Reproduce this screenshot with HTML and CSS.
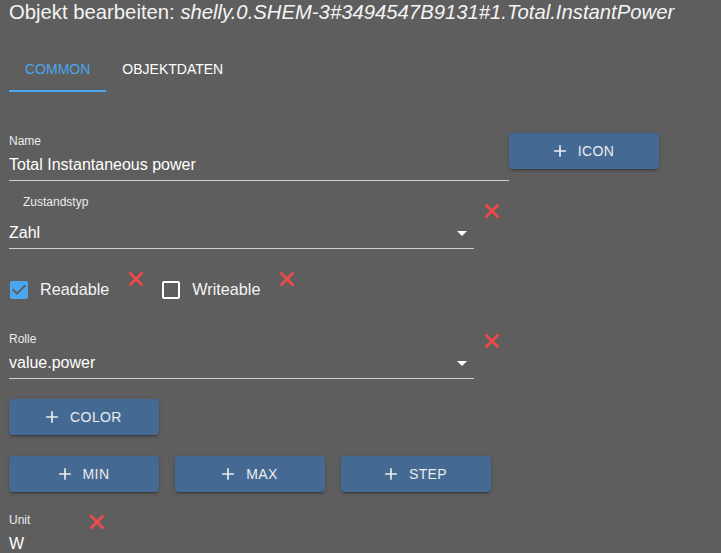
FILE: index.html
```html
<!DOCTYPE html>
<html lang="de">
<head>
    <meta charset="UTF-8">
    <meta name="viewport" content="width=device-width, initial-scale=1.0">
    <title>Objekt bearbeiten</title>
    <link rel="stylesheet" href="styles.css">
</head>
<body>
    <div class="dialog-title">Objekt bearbeiten: <i>shelly.0.SHEM-3#3494547B9131#1.Total.InstantPower</i></div>

    <div class="tabs">
        <div class="tab tab-active">Common</div>
        <div class="tab">Objektdaten</div>
    </div>

    <div class="row row-name">
        <div class="field field-name">
            <div class="field-label">Name</div>
            <div class="field-value">Total Instantaneous power</div>
        </div>
        <button class="btn">
            <svg class="btn-icon" viewBox="0 0 24 24"><path d="M19 13h-6v6h-2v-6H5v-2h6V5h2v6h6v2z"/></svg>
            Icon
        </button>
    </div>

    <div class="row row-type">
        <div class="field field-select">
            <div class="field-label label-indent">Zustandstyp</div>
            <div class="field-value select-value">
                <span>Zahl</span>
                <svg class="arrow" viewBox="0 0 24 24"><path d="M7 10l5 5 5-5z"/></svg>
            </div>
        </div>
        <svg class="clear clear-type" viewBox="0 0 16 16"><path d="M1.5 1.5L14.5 14.5M14.5 1.5L1.5 14.5"/></svg>
    </div>

    <div class="row row-check">
        <svg class="checkbox checkbox-on" viewBox="3 3 18 18"><path d="M19 3H5c-1.11 0-2 .9-2 2v14c0 1.1.89 2 2 2h14c1.11 0 2-.9 2-2V5c0-1.1-.89-2-2-2zm-9 14l-5-5 1.41-1.41L10 14.17l7.590-7.59L19 8l-9 9z"/></svg>
        <span class="check-label">Readable</span>
        <svg class="clear clear-check" viewBox="0 0 16 16"><path d="M1.5 1.5L14.5 14.5M14.5 1.5L1.5 14.5"/></svg>
        <svg class="checkbox checkbox-off" viewBox="3 3 18 18"><path d="M19 5v14H5V5h14m0-2H5c-1.1 0-2 .9-2 2v14c0 1.1.9 2 2 2h14c1.1 0 2-.9 2-2V5c0-1.1-.9-2-2-2z"/></svg>
        <span class="check-label">Writeable</span>
        <svg class="clear clear-check" viewBox="0 0 16 16"><path d="M1.5 1.5L14.5 14.5M14.5 1.5L1.5 14.5"/></svg>
    </div>

    <div class="row row-role">
        <div class="field field-select">
            <div class="field-label">Rolle</div>
            <div class="field-value select-value">
                <span>value.power</span>
                <svg class="arrow" viewBox="0 0 24 24"><path d="M7 10l5 5 5-5z"/></svg>
            </div>
        </div>
        <svg class="clear clear-role" viewBox="0 0 16 16"><path d="M1.5 1.5L14.5 14.5M14.5 1.5L1.5 14.5"/></svg>
    </div>

    <div class="row row-color">
        <button class="btn">
            <svg class="btn-icon" viewBox="0 0 24 24"><path d="M19 13h-6v6h-2v-6H5v-2h6V5h2v6h6v2z"/></svg>
            Color
        </button>
    </div>

    <div class="row row-limits">
        <button class="btn">
            <svg class="btn-icon" viewBox="0 0 24 24"><path d="M19 13h-6v6h-2v-6H5v-2h6V5h2v6h6v2z"/></svg>
            Min
        </button>
        <button class="btn">
            <svg class="btn-icon" viewBox="0 0 24 24"><path d="M19 13h-6v6h-2v-6H5v-2h6V5h2v6h6v2z"/></svg>
            Max
        </button>
        <button class="btn">
            <svg class="btn-icon" viewBox="0 0 24 24"><path d="M19 13h-6v6h-2v-6H5v-2h6V5h2v6h6v2z"/></svg>
            Step
        </button>
    </div>

    <div class="row row-unit">
        <div class="field field-unit">
            <div class="field-label">Unit</div>
            <div class="field-value">W</div>
        </div>
        <svg class="clear clear-unit" viewBox="0 0 16 16"><path d="M1.5 1.5L14.5 14.5M14.5 1.5L1.5 14.5"/></svg>
    </div>
</body>
</html>
```

FILE: styles.css
```css
body {
    margin: 0;
    padding: 0 9px;
    background-color: #5e5e5e;
    color: #fff;
    font-family: "Liberation Sans", Arial, sans-serif;
    overflow: hidden;
}

.dialog-title {
    font-size: 20.3px;
    line-height: 24px;
    color: #f4f4f4;
    margin-bottom: 20px;
    white-space: nowrap;
}

.tabs {
    display: flex;
    height: 48px;
}

.tab {
    padding: 4px 16px 0;
    line-height: 42px;
    font-size: 14px;
    text-transform: uppercase;
    color: #fff;
    border-bottom: 2px solid transparent;
}

.tab-active {
    color: #4aa6ef;
    border-bottom-color: #4aa6ef;
}

.row {
    display: flex;
    align-items: flex-start;
}

.field-label {
    font-size: 12px;
    line-height: 14px;
    color: #ececec;
}

.label-indent {
    padding-left: 14px;
}

.field-value {
    font-size: 16px;
    line-height: 19px;
    padding-bottom: 6px;
    border-bottom: 1px solid #cfcfcf;
}

.select-value {
    display: flex;
    justify-content: space-between;
    align-items: center;
}

.arrow {
    width: 24px;
    height: 24px;
    margin: -3px 0;
    fill: #fff;
}

/* name row */
.row-name {
    margin-top: 41px;
}

.field-name {
    width: 500px;
    padding-top: 1px;
}

.field-name .field-value {
    margin-top: 7px;
}

/* selects */
.field-select {
    width: 465px;
}

.row-type {
    margin-top: 14px;
}

.row-type .field-value {
    margin-top: 14px;
}

.row-role {
    margin-top: 33px;
}

.row-role .field-value {
    margin-top: 7px;
}

.clear {
    width: 16px;
    height: 16px;
    fill: none;
    stroke: #ef4a4a;
    stroke-width: 2.7;
    flex-shrink: 0;
}

.clear-type {
    margin: 8px 0 0 10px;
}

.clear-role {
    margin: 1px 0 0 10px;
}

/* checkboxes */
.row-check {
    margin-top: 22px;
}

.checkbox {
    width: 18px;
    height: 18px;
    margin-top: 10px;
}

.checkbox-on {
    margin-left: 1px;
    fill: #4aa6ef;
}

.checkbox-off {
    margin-left: 18px;
    fill: #fff;
}

.check-label {
    font-size: 16.2px;
    line-height: 19px;
    margin: 9px 0 0 12px;
    color: #f4f4f4;
}

.clear-check {
    margin-left: 19px;
}

/* buttons */
.btn {
    display: inline-flex;
    align-items: center;
    justify-content: center;
    width: 150px;
    height: 36px;
    padding: 0;
    border: none;
    border-radius: 4px;
    background-color: #446a94;
    color: #ececec;
    font-family: "Liberation Sans", Arial, sans-serif;
    font-size: 14px;
    letter-spacing: 0.4px;
    text-transform: uppercase;
    box-shadow: 0 3px 1px -2px rgba(0, 0, 0, 0.2), 0 2px 2px 0 rgba(0, 0, 0, 0.14), 0 1px 5px 0 rgba(0, 0, 0, 0.12);
    cursor: pointer;
}

.btn-icon {
    width: 20px;
    height: 20px;
    margin: 0 8px 0 -4px;
    fill: #ececec;
}

.row-color {
    margin-top: 20px;
}

.row-limits {
    margin-top: 21px;
    gap: 16px;
}

/* unit */
.row-unit {
    margin-top: 21px;
}

.field-unit {
    width: 80px;
}

.field-unit .field-value {
    margin-top: 7px;
}

.clear-unit {
    margin-top: 1px;
}
```
